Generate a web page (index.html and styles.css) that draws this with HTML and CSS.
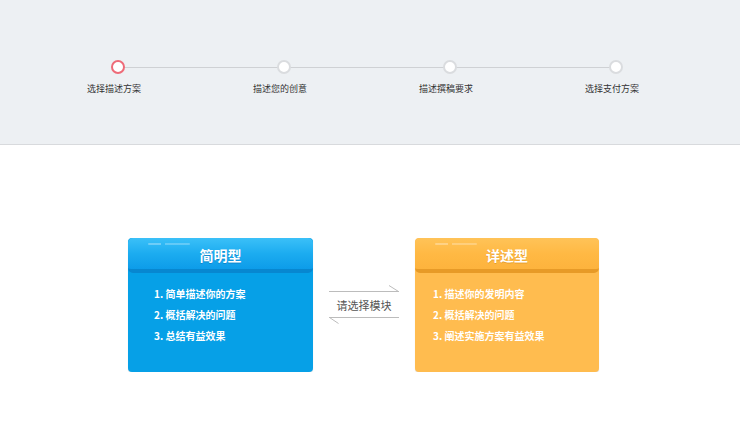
FILE: index.html
```html
<!DOCTYPE html>
<html lang="zh">
<head>
<meta charset="utf-8">
<link rel="stylesheet" href="styles.css">
</head>
<body>
<div class="band">
  <div class="steps">
    <div class="step active"><span class="dot"></span><span class="label">选择描述方案</span></div>
    <div class="step"><span class="dot"></span><span class="label">描述您的创意</span></div>
    <div class="step"><span class="dot"></span><span class="label">描述撰稿要求</span></div>
    <div class="step"><span class="dot"></span><span class="label">选择支付方案</span></div>
  </div>
</div>
<div class="choices">
  <div class="card blue">
    <div class="card-head"><span class="gloss"></span>简明型</div>
    <ol class="items">
      <li>1. 简单描述你的方案</li>
      <li>2. 概括解决的问题</li>
      <li>3. 总结有益效果</li>
    </ol>
  </div>
  <div class="switch">
    <svg class="arrow" width="70" height="8" viewBox="0 0 70 8"><path d="M0 7.5H70M60 1.5L69.5 7.5" fill="none" stroke="#bcbcbc" stroke-width="1"/></svg>
    <span class="switch-text">请选择模块</span>
    <svg class="arrow" width="70" height="8" viewBox="0 0 70 8"><path d="M0 0.5H70M0.5 0.5L9.5 6.5" fill="none" stroke="#bcbcbc" stroke-width="1"/></svg>
  </div>
  <div class="card orange">
    <div class="card-head"><span class="gloss"></span>详述型</div>
    <ol class="items">
      <li>1. 描述你的发明内容</li>
      <li>2. 概括解决的问题</li>
      <li>3. 阐述实施方案有益效果</li>
    </ol>
  </div>
</div>
</body>
</html>
```

FILE: styles.css
```css
html, body {
  margin: 0;
  padding: 0;
  background: #ffffff;
  font-family: "Noto Sans CJK SC", "Noto Sans", sans-serif;
}

.band {
  height: 144px;
  background: #edf0f3;
  border-bottom: 1px solid #d8dadd;
}

.steps {
  position: relative;
  display: flex;
  margin-left: 35px;
  width: 664px;
  padding-top: 60px;
}

.steps::before {
  content: "";
  position: absolute;
  left: 83px;
  right: 83px;
  top: 67px;
  height: 1px;
  background: #cfd1d4;
}

.step {
  width: 166px;
  display: flex;
  flex-direction: column;
  align-items: center;
}

.dot {
  position: relative;
  z-index: 1;
  box-sizing: border-box;
  width: 14px;
  height: 14px;
  border-radius: 50%;
  background: #ffffff;
  border: 2px solid #dadcdf;
}

.step.active .dot {
  border-color: #ee6b78;
}

.label {
  margin-top: 8px;
  padding-right: 8px;
  font-size: 9px;
  line-height: 14px;
  color: #333333;
}

.choices {
  display: flex;
  align-items: flex-start;
  margin-top: 93px;
  margin-left: 128px;
}

.card {
  width: 185px;
  height: 134px;
  border-radius: 4px;
  box-shadow: 0 1px 1px rgba(0, 0, 0, 0.12);
}

.card.blue {
  background: #06a0e7;
}

.card.orange {
  width: 184px;
  background: #ffbc4f;
}

.card-head {
  position: relative;
  box-sizing: border-box;
  height: 35px;
  border-radius: 5px;
  text-align: center;
  font-size: 14px;
  font-weight: 700;
  line-height: 34px;
  color: #ffffff;
}

.blue .card-head {
  background: linear-gradient(#3bc0f8 0%, #1cacf0 50%, #0d9ce9 100%);
  border-bottom: 4px solid #0787d0;
  text-shadow: 0 1px 0 rgba(0, 80, 150, 0.35);
}

.orange .card-head {
  background: linear-gradient(#ffc358 0%, #ffb944 50%, #fdb33d 100%);
  border-bottom: 4px solid #e79a27;
  text-shadow: 0 1px 0 rgba(170, 100, 0, 0.3);
}

.gloss {
  position: absolute;
  left: 20px;
  top: 5px;
  width: 42px;
  height: 2px;
  border-radius: 1px;
  background: linear-gradient(90deg, rgba(255,255,255,0.3) 0 30%, transparent 30% 40%, rgba(255,255,255,0.25) 40% 100%);
}

.items {
  list-style: none;
  margin: 0;
  padding: 10px 0 0 26px;
}

.orange .items {
  padding-left: 18px;
}

.items li {
  font-size: 10px;
  line-height: 21px;
  font-weight: 700;
  color: #ffffff;
}

.switch {
  width: 102px;
  display: flex;
  flex-direction: column;
  align-items: center;
  padding-top: 46px;
}

.arrow {
  display: block;
}

.switch-text {
  margin: 6px 0 5px;
  font-size: 11px;
  line-height: 14px;
  color: #555555;
}
```
